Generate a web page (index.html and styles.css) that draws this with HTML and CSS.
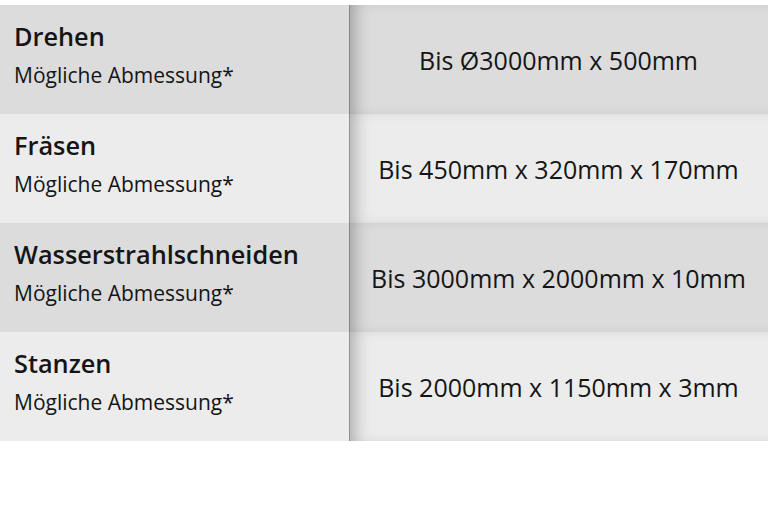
FILE: index.html
```html
<!DOCTYPE html>
<html lang="de">
<head>
<meta charset="utf-8">
<link rel="stylesheet" href="styles.css">
</head>
<body>
<div class="table">
  <div class="row dark">
    <div class="label"><div class="title">Drehen</div><div class="sub">Mögliche Abmessung*</div></div>
    <div class="value">Bis Ø3000mm x 500mm</div>
  </div>
  <div class="row light">
    <div class="label"><div class="title">Fräsen</div><div class="sub">Mögliche Abmessung*</div></div>
    <div class="value">Bis 450mm x 320mm x 170mm</div>
  </div>
  <div class="row dark">
    <div class="label"><div class="title">Wasserstrahlschneiden</div><div class="sub">Mögliche Abmessung*</div></div>
    <div class="value">Bis 3000mm x 2000mm x 10mm</div>
  </div>
  <div class="row light">
    <div class="label"><div class="title">Stanzen</div><div class="sub">Mögliche Abmessung*</div></div>
    <div class="value">Bis 2000mm x 1150mm x 3mm</div>
  </div>
</div>
</body>
</html>
```
FILE: styles.css
```css
html, body {
  margin: 0;
  padding: 0;
  background: #ffffff;
}
body {
  font-family: "Open Sans", "Noto Sans", sans-serif;
  color: #151515;
  padding-top: 5px;
}
.table {
  display: flex;
  flex-direction: column;
}
.row {
  display: grid;
  grid-template-columns: 349px 1fr;
  height: 109px;
}
.dark { background: #dcdcdc; }
.light { background: #ececec; }
.label {
  padding: 15px 0 0 14px;
}
.title {
  font-size: 25.3px;
  font-weight: 600;
  line-height: 32px;
}
.sub {
  font-size: 21px;
  line-height: 28px;
  margin-top: 9px;
}
.value {
  display: flex;
  align-items: center;
  justify-content: center;
  font-size: 25px;
  box-shadow: inset 1px 0 0 rgba(0,0,0,0.22), inset 14px 0 18px -10px rgba(0,0,0,0.32);
}
```
